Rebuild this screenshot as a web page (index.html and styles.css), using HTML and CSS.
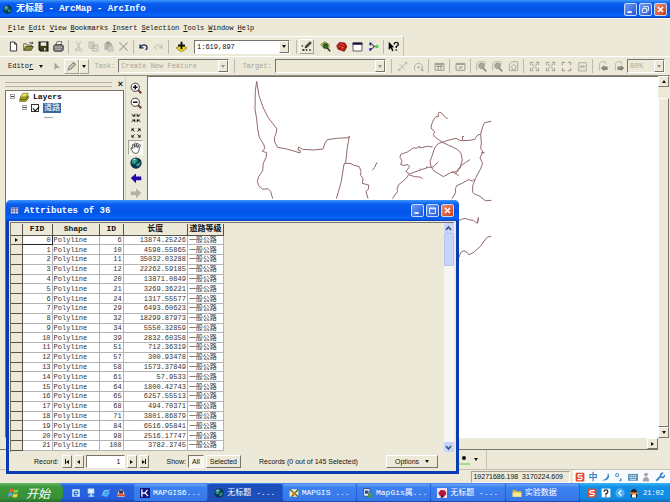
FILE: index.html
```html
<!DOCTYPE html>
<html lang="zh-CN">

<head>
    <meta charset="UTF-8">
    <meta name="viewport" content="width=device-width, initial-scale=1.0">
    <title>无标题 - ArcMap - ArcInfo</title>
    <link rel="stylesheet" href="styles.css">
</head>

<body>
    <!-- Shared icons -->
    <svg class="sprite" aria-hidden="true">
        <symbol id="i-globe" viewBox="0 0 16 16">
            <circle cx="8" cy="8" r="7.5" fill="#0b3350" />
            <path d="M3 4c3-3 6-2 7 0s-2 3-3 5-4 0-5-2zM10 8l4-1-1 4-3 2-2-2z" fill="#2f9a83" />
            <path d="M4 4l3-1" stroke="#bfe4ea" stroke-width="1.5" />
        </symbol>
        <symbol id="i-min" viewBox="0 0 13 13">
            <path d="M3 9.500h5" stroke="#fff" stroke-width="2" />
        </symbol>
        <symbol id="i-close" viewBox="0 0 13 13">
            <path d="M3.500 3.500l6 6M9.500 3.500l-6 6" stroke="#fff" stroke-width="1.800" />
        </symbol>
        <symbol id="i-zoomlayer" viewBox="0 0 16 16">
            <path d="M1 14V3l3-2h9v5" fill="none" stroke="#b5b2a4" stroke-width="1.300" />
            <circle cx="8" cy="7" r="4" fill="#aaa798" stroke="#8b897e" />
            <path d="M10 10l5 5" stroke="#8b897e" stroke-width="2.500" />
        </symbol>
        <symbol id="i-page" viewBox="0 0 16 16">
            <path d="M2 2h4M10 2h4v4M14 10v4h-4M6 14H2v-4M2 6V2M4 4l3 3M12 4L9 7M4 12l3-3M12 12L9 9" fill="none" stroke="#a9a697" stroke-width="1.500" />
        </symbol>
        <symbol id="i-sogou" viewBox="0 0 16 16">
            <rect x="1" y="1" width="14" height="14" rx="2" fill="#e24a2c" />
            <path d="M12 4H6Q3 6 6 8h4q3 2 0 4H4" fill="none" stroke="#fff" stroke-width="2" />
        </symbol>
    </svg>

    <div class="desktop">
        <!-- Main window -->
        <header class="titlebar">
            <svg class="app-icon"><use href="#i-globe" /></svg>
            <h1>无标题 - ArcMap - ArcInfo</h1>
            <div class="win-buttons">
                <button aria-label="Minimize"><svg><use href="#i-min" /></svg></button>
                <button aria-label="Restore"><svg viewBox="0 0 13 13"><path d="M5 5V3h5v5H8M3 5.500h5V10H3z" fill="none" stroke="#fff" /></svg></button>
                <button class="close" aria-label="Close"><svg><use href="#i-close" /></svg></button>
            </div>
        </header>

        <nav class="menubar">
            <a href="#"><u>F</u>ile</a>
            <a href="#"><u>E</u>dit</a>
            <a href="#"><u>V</u>iew</a>
            <a href="#"><u>B</u>ookmarks</a>
            <a href="#"><u>I</u>nsert</a>
            <a href="#"><u>S</u>election</a>
            <a href="#"><u>T</u>ools</a>
            <a href="#"><u>W</u>indow</a>
            <a href="#"><u>H</u>elp</a>
        </nav>

        <!-- Standard toolbar -->
        <div class="toolbar standard">
            <button aria-label="New"><svg viewBox="0 0 16 16"><path d="M3.500 1.500h6l3 3v10h-9zM9.500 1.500v3h3" fill="#fff" stroke="#222" stroke-width="1.300" /></svg></button>
            <button aria-label="Open"><svg viewBox="0 0 16 16"><path d="M1 13V4h4l1 2h6v2" fill="#f5edaa" stroke="#333" /><path d="M1 13.500L4 8h11l-3 5.500z" fill="#8f8a35" stroke="#222" /><path d="M9 3q3-3 5 1m0-3v3h-3" fill="none" stroke="#222" /></svg></button>
            <button aria-label="Save"><svg viewBox="0 0 16 16"><path d="M1.500 1.500h13v13h-11l-2-2z" fill="#3d3f18" stroke="#111" stroke-width="1.500" /><path d="M4 2h8v5H4z" fill="#eee" /><path d="M9 10h2v4H9z" fill="#eee" /></svg></button>
            <button aria-label="Print"><svg viewBox="0 0 16 16"><path d="M4 6l2-5h7l-2 5" fill="#fff" stroke="#333" /><path d="M1 7l2-2h10l2 2v6l-2 2H2l-1-2z" fill="#777" stroke="#222" /><path d="M2 9h11M3 12h9" stroke="#ddd" /></svg></button>
            <i class="sep"></i>
            <button disabled aria-label="Cut"><svg viewBox="0 0 16 16"><path d="M5 1l5 10M11 1L6 11" stroke="#b5b2a4" stroke-width="1.300" /><circle cx="5" cy="13" r="2" fill="none" stroke="#b5b2a4" /><circle cx="11" cy="13" r="2" fill="none" stroke="#b5b2a4" /></svg></button>
            <button disabled aria-label="Copy"><svg viewBox="0 0 16 16"><path d="M1.500 1.500h7v9h-7zM6.500 5.500h8v9h-8zM3 4h4M3 7h3M8 8h5M8 11h5" fill="none" stroke="#b5b2a4" stroke-width="1.300" /></svg></button>
            <button disabled aria-label="Paste"><svg viewBox="0 0 16 16"><path d="M2 3h11v10H2z" fill="#bbb8aa" /><path d="M5 1h5v3H5z" fill="#918f82" /><path d="M7.500 7.500h7v7h-7zM9 10h4M9 12h4" fill="#eee" stroke="#999" /></svg></button>
            <button disabled aria-label="Delete"><svg viewBox="0 0 16 16"><path d="M2 2l12 12M14 2L2 14" stroke="#a9a697" stroke-width="1.800" /></svg></button>
            <i class="sep"></i>
            <button aria-label="Undo"><svg viewBox="0 0 16 16"><path d="M3 5v5h5M3 9q6-6 10-1 1 3-2 5" fill="none" stroke="#111d4d" stroke-width="1.800" /></svg></button>
            <button disabled aria-label="Redo"><svg viewBox="0 0 16 16"><path d="M13 5v5H8M13 9Q7 3 3 8q-1 3 2 5" fill="none" stroke="#c2bfb1" stroke-width="1.500" /></svg></button>
            <i class="sep"></i>
            <button class="add-data" aria-label="Add Data"><svg viewBox="0 0 16 16"><path d="M0 10l8-4 8 4-8 6z" fill="#f0de1c" stroke="#766b14" /><path d="M8 1v11M3 6.500h10" stroke="#111" stroke-width="2.800" /></svg></button>
            <span class="combo scale">
                <select aria-label="Map scale"><option>1:619,897</option></select><b class="arrow"></b>
            </span>
            <i class="sep"></i>
            <button class="framed" aria-label="Editor Toolbar"><svg viewBox="0 0 16 16"><path d="M2 6v2M2 13h3M7 13h2M12 13h2" stroke="#111" stroke-width="2" /><path d="M6 10l1-3 6-6 2 2-6 6z" fill="#555" stroke="#111" /></svg></button>
            <span class="tool-group">
                <button aria-label="ArcCatalog"><svg viewBox="0 0 16 16"><path d="M1 5l6-4 6 4v6H6z" fill="#c9c451" stroke="#6d6b2d" /><circle cx="8" cy="7" r="4" fill="#335f33" /><path d="M10 10l5 5" stroke="#222" stroke-width="2" /></svg></button>
                <button aria-label="ArcToolbox"><svg viewBox="0 0 16 16"><path d="M1 7l4-5 8 1 3 5-4 7-9-3z" fill="#b31910" stroke="#6d0b08" /><path d="M3 7l9 3M6 4l6 2M9 9v4" stroke="#f26b4c" /></svg></button>
                <button aria-label="Command Line"><svg viewBox="0 0 16 16"><path d="M1.500 2.500h13v12h-13z" fill="#fff" stroke="#222" /><path d="M1 4h14" stroke="#16164e" stroke-width="3" /></svg></button>
                <button aria-label="ModelBuilder"><svg viewBox="0 0 16 16"><path d="M2 2h3v4H2zM2 10h3v4H2z" fill="#27279a" /><path d="M5 4l4 4-4 4M9 8h4" fill="none" stroke="#333" stroke-width="1.500" /><circle cx="13" cy="8" r="2.500" fill="#4fd141" /></svg></button>
            </span>
            <i class="sep"></i>
            <button aria-label="What's This?"><svg viewBox="0 0 16 16"><path d="M1 1v12l3-3 2 5 2-1-2-5h3z" fill="#000" /><path d="M9 5q0-3 3-3t3 3q0 2-3 3v2M12 12v2" fill="none" stroke="#111" stroke-width="2" /></svg></button>
        </div>

        <!-- Editor toolbar -->
        <div class="toolbar editor">
            <button class="editor-menu"><span>Edito<u>r</u></span><b class="tri"></b></button>
            <button disabled aria-label="Edit Tool"><svg viewBox="0 0 16 16"><path d="M5 2v11l3-3h5z" fill="#aaa798" /></svg></button>
            <button disabled class="framed" aria-label="Sketch Tool"><svg viewBox="0 0 16 16"><path d="M3 13l1-4 7-7 3 3-7 7z" fill="#c8c5b8" stroke="#918f82" stroke-width="1.500" /></svg></button>
            <button class="drop" aria-label="Sketch tools"><b class="tri"></b></button>
            <label for="task">Task:</label>
            <span class="combo off wide"><select id="task" disabled><option>Create New Feature</option></select><b class="arrow"></b></span>
            <i class="sep"></i>
            <label for="target">Target:</label>
            <span class="combo off wide"><select id="target" disabled><option></option></select><b class="arrow"></b></span>
            <i class="sep"></i>
            <div class="edit-tools">
                <button disabled aria-label="Split"><svg viewBox="0 0 16 16"><path d="M2 14L13 3M4 5l7 7M11 2h3v3M1 12h3v3" fill="none" stroke="#b5b2a4" stroke-width="1.300" /></svg></button>
                <button disabled aria-label="Rotate"><svg viewBox="0 0 16 16"><path d="M4 14a6 6 0 1 1 8 0M12 10v4h4" fill="none" stroke="#a9a697" stroke-width="1.300" /><circle cx="8" cy="9" r="1.500" fill="#999" /></svg></button>
                <i class="sep"></i>
                <button disabled aria-label="Attributes"><svg viewBox="0 0 16 16"><path d="M1.500 3.500h13v10h-13zM2 5h12M6 5v8M10 5v8M3 8h10" fill="none" stroke="#96938a" stroke-width="1.300" /></svg></button>
                <i class="sep"></i>
                <button disabled aria-label="Sketch Properties"><svg viewBox="0 0 16 16"><path d="M1.500 3.500h13v10h-13zM2 5h12M5 11l6-3M6 8l4 3" fill="none" stroke="#96938a" stroke-width="1.300" /></svg></button>
                <i class="sep"></i>
                <button disabled aria-label="Zoom In Layout"><svg><use href="#i-zoomlayer" /></svg></button>
                <button disabled aria-label="Zoom Out Layout"><svg><use href="#i-zoomlayer" /></svg></button>
                <button disabled aria-label="Pan Layout"><svg viewBox="0 0 16 16"><path d="M2 14V4l4-3h8v13zM5 8l3-3 4 3-2 5H7z" fill="none" stroke="#a9a697" stroke-width="1.300" /></svg></button>
                <i class="sep"></i>
                <button disabled aria-label="Fixed Zoom In"><svg><use href="#i-page" /></svg></button>
                <button disabled aria-label="Fixed Zoom Out"><svg><use href="#i-page" /></svg></button>
                <button disabled aria-label="Whole Page"><svg viewBox="0 0 16 16"><path d="M2 6V2h4M10 2h4v4M14 10v4h-4M6 14H2v-4" fill="none" stroke="#a9a697" stroke-width="1.800" /></svg></button>
                <button disabled aria-label="100%"><svg viewBox="0 0 16 16"><path d="M2.500 2.500h11v12h-11zM6 6v5M10 6v5M5 8h6" fill="none" stroke="#a9a697" stroke-width="1.300" /></svg></button>
                <i class="sep"></i>
                <button disabled aria-label="Previous Extent"><svg viewBox="0 0 16 16"><path d="M2 14V4l3-3h6v4" fill="none" stroke="#a9a697" /><path d="M4 10l5-4v2h5v5H9v2z" fill="#8b897e" /></svg></button>
                <button disabled aria-label="Next Extent"><svg viewBox="0 0 16 16"><path d="M2 14V4l3-3h6v4" fill="none" stroke="#a9a697" /><path d="M15 10l-5-4v2H5v5h5v2z" fill="#8b897e" /></svg></button>
            </div>
            <span class="combo off percent"><select disabled aria-label="Page zoom"><option>80%</option></select><b class="arrow"></b></span>
        </div>

        <main class="workspace">
            <aside class="toc">
                <div class="toc-head"><i class="grip"></i><button aria-label="Close contents">×</button></div>
                <div class="toc-list">
                    <div class="layer-row">
                        <i class="minus"></i>
                        <svg viewBox="0 0 16 16"><path d="M1 11l4-5h10l-4 6H1zM1 14l1-2h9l4-5v3l-4 5H1z" fill="#a4a51c" stroke="#55560d" /><path d="M2 8l4-6h9l-4 6z" fill="#e8e55c" stroke="#696a12" /></svg>
                        <strong>Layers</strong>
                    </div>
                    <div class="layer-row child">
                        <i class="minus"></i>
                        <input type="checkbox" id="road" checked>
                        <label for="road">道路</label>
                    </div>
                    <i class="line-symbol"></i>
                </div>
            </aside>

            <div class="tools">
                <button aria-label="Zoom In"><svg viewBox="0 0 16 16"><circle cx="7" cy="7" r="5.500" fill="#fff" stroke="#333" stroke-width="1.300" /><path d="M4 7h6M7 4v6" stroke="#111" stroke-width="2" /><path d="M11 11l4 4" stroke="#6b3a24" stroke-width="2.500" /></svg></button>
                <button aria-label="Zoom Out"><svg viewBox="0 0 16 16"><circle cx="7" cy="7" r="5.500" fill="#fff" stroke="#333" stroke-width="1.300" /><path d="M4 7h6" stroke="#111" stroke-width="2" /><path d="M11 11l4 4" stroke="#6b3a24" stroke-width="2.500" /></svg></button>
                <button aria-label="Fixed Zoom In"><svg viewBox="0 0 16 16"><path d="M2 3l3 2M14 3l-3 2M2 13l3-2M14 13l-3-2" stroke="#333" stroke-width="1.300" /><path d="M3 6h4V2zM13 6H9V2zM3 10h4v4zM13 10H9v4z" fill="#111" /></svg></button>
                <button aria-label="Fixed Zoom Out"><svg viewBox="0 0 16 16"><path d="M2 2h4L2 6zM14 2h-4l4 4zM2 14h4l-4-4zM14 14h-4l4-4z" fill="#111" /><path d="M3 3l3 3M13 3l-3 3M3 13l3-3M13 13l-3-3" stroke="#222" stroke-width="1.300" /></svg></button>
                <button class="pressed" aria-label="Pan"><svg viewBox="0 0 16 16"><path d="M5 15Q2 11 1 8q1-2 3 1L3 4q1-2 2 0l1 3V2q1-2 2 0v5l1-5q2-1 2 1l-1 5 2-4q2-1 2 1-2 3-2 6l-2 4z" fill="#fff" stroke="#333" /></svg></button>
                <button aria-label="Full Extent"><svg><use href="#i-globe" /></svg></button>
                <button aria-label="Back"><svg viewBox="0 0 16 16"><path d="M1 8l7-6v4h7v5H8v4z" fill="#2208a8" /></svg></button>
                <button disabled aria-label="Forward"><svg viewBox="0 0 16 16"><path d="M15 8L8 2v4H1v5h7v4z" fill="#b3b1a8" /></svg></button>
            </div>

            <!-- Road map -->
            <div class="map-view">
                <svg class="map" viewBox="-276 9 1530 1080" preserveAspectRatio="xMinYMin meet" role="img" aria-label="道路">
                    <g class="roads">
                        <path d="M50 22L46 50 45 105 50 135 53 165 58 190 72 213 74 224 67 232 80 236 78 250 70 268 68 290 56 308 52 322 56 335 68 346 84 344 92 352 98 374" />
                        <path d="M50 22L57 65 70 102 84 130 111 165 107 182 103 190 104 204 113 220 140 225 165 232 180 237 181 230 174 228 176 219 188 226 220 228 249 225 255 207 262 197 290 193 326 191 328 186 322 220 317 266 312 270 304 322 289 374" />
                        <path d="M312 268L330 268 340 273 358 278 363 292 362 304 369 313 367 328 386 333 385 346 378 352 384 374" />
                        <path d="M397 289L404 280 411 265" />
                        <path d="M623 134L616 130 608 120 600 114 594 118 596 128 588 128 580 138 576 148 573 162 584 174 580 182 586 190 600 200 608 205" />
                        <path d="M608 205L620 200 648 193 662 200 690 199 704 196 712 184 722 180 728 158 734 146 754 142M668 199L667 187 672 188" />
                        <path d="M608 205L595 208 584 222 576 246 570 262 573 278 582 291 610 308 632 296 648 293 661 278 667 258 663 238 652 226 640 220 626 214 608 205" />
                        <path d="M578 219L562 217 540 222 538 216 533 222 520 222 502 234 482 241 480 250 486 260 482 272 492 274 504 272 509 278 498 292 508 300 524 294 544 287 566 280 580 279 588 270 594 265M544 287L540 283M560 282V277" />
                        <path d="M548 314L540 309 524 308 506 302 496 316 476 332 471 346 473 352 457 374" />
                        <path d="M636 292L645 298 656 305M648 298L660 282 664 274 676 266 690 257" />
                        <path d="M722 180L724 205 722 224 728 232 725 236 733 235 726 238 720 252 728 268 721 286 706 314 697 321 685 317 666 328 650 335 646 346 647 356 636 374" />
                        <path d="M706 316L698 335 698 355 704 360 720 367 736 380 754 379" />
                        <path d="M650 442L664 436 676 433 690 438 700 439 712 448 715 431 714 443" />
                        <path d="M657 550L662 536 672 530 680 534 686 542 700 536 720 518 737 495 742 489 754 487" />
                    </g>
                </svg>
            </div>
            <div class="vscroll"><button aria-label="Scroll up"><b class="tri up"></b></button><i></i><button aria-label="Scroll down"><b class="tri"></b></button></div>
        </main>

        <div class="hscroll"><button aria-label="Scroll right"><b class="tri right"></b></button></div>
        <div class="drawbar"><button aria-label="Marker Color"><svg viewBox="0 0 11 11"><circle cx="5" cy="4" r="2" fill="#111" /><path d="M0 10h11" stroke="#5fd040" stroke-width="1" /></svg></button><b class="tri"></b></div>
        <footer class="statusbar">
            <output>19271686.198&nbsp; 3170224.609</output>
            <div class="ime">
                <svg><use href="#i-sogou" /></svg>
                <span>中</span>
                <svg viewBox="0 0 16 16"><path d="M11 1q4 6 0 10-4 4-9 2 9-2 9-12z" fill="#3b84c4" /></svg>
                <svg viewBox="0 0 16 16"><circle cx="5" cy="5" r="2.500" fill="none" stroke="#3b84c4" stroke-width="1.500" /><path d="M11 10v3l-2 2" fill="none" stroke="#3b84c4" stroke-width="2" /></svg>
                <svg viewBox="0 0 16 16"><path d="M0 3h16v11H0z" fill="#5b93bb" /><path d="M2 6h12M2 9h12M4 12h8" stroke="#fff" stroke-dasharray="2 1" stroke-width="1.500" /></svg>
                <svg viewBox="0 0 16 16"><circle cx="8" cy="4" r="3" fill="#a3a3ad" /><path d="M3 15q0-7 5-7t5 7z" fill="#a3a3ad" /></svg>
                <svg viewBox="0 0 16 16"><path d="M2 14l7-7" stroke="#3b84c4" stroke-width="3" /><path d="M13 1L9 4v4l4 1 3-4" fill="none" stroke="#3b84c4" stroke-width="2.500" /></svg>
            </div>
        </footer>

        <!-- Taskbar -->
        <div class="taskbar">
            <button class="start">
                <svg viewBox="0 0 16 16"><path d="M2 3q3-2 5 0L6 7Q4 6 1 7z" fill="#ee5a2d" /><path d="M8 3q3 2 6 0l-1 4q-3 2-6 0z" fill="#7fd04a" /><path d="M1 8q3-1 5 0l-1 5q-2-2-5 0z" fill="#5da3f2" /><path d="M7 9q3 1 6 0l-1 4q-3 2-6 0z" fill="#f9d03a" /></svg>
                开始
            </button>
            <div class="quick">
                <a href="#" aria-label="Browser"><svg viewBox="0 0 16 16"><path d="M2 2h12v12H2z" fill="#dcebfa" /><path d="M4 9h7q0-4-3-4t-3 4 5 3" fill="none" stroke="#2378d3" stroke-width="2" /></svg></a>
                <a href="#" aria-label="Desktop"><svg viewBox="0 0 16 16"><path d="M3 1h10v8H3z" fill="#e6f1ff" stroke="#6faaf0" /><path d="M7 9h3v3H7zM4 12h9v2H4z" fill="#bfdcfa" /></svg></a>
                <a href="#" aria-label="Internet Explorer"><svg viewBox="0 0 16 16"><path d="M4 9h8q0-5-4-5T4 9t7 3" fill="none" stroke="#51bdf6" stroke-width="2.500" /><path d="M1 13Q4 4 15 3" fill="none" stroke="#a7e0fa" /></svg></a>
                <a href="#" aria-label="Messenger"><svg viewBox="0 0 16 16"><path d="M2 14q0-9 6-12 6 3 6 12z" fill="#e8d8c5" /><path d="M5 4h6v5H5z" fill="#3d2d34" /><path d="M2 10h12v3H2z" fill="#d8472f" /></svg></a>
            </div>
            <div class="tasks">
                <button><svg viewBox="0 0 16 16"><path d="M0 0h16v16H0z" fill="#0c1580" /><path d="M3 2v12M3 8h5l4-5M8 8l5 5" stroke="#fff" stroke-width="2" fill="none" /></svg>MAPGIS6...</button>
                <button class="active"><svg><use href="#i-globe" /></svg>无标题 -...</button>
                <button><svg viewBox="0 0 16 16"><path d="M1 2h14v12H1z" fill="#f4edc4" /><path d="M1 2l14 12M15 2L4 14" stroke="#385e36" stroke-width="2" /><circle cx="8" cy="9" r="3" fill="#c98231" /></svg>MAPGIS ...</button>
                <button><svg viewBox="0 0 16 16"><path d="M1 1h10v12H1z" fill="#f1f5fb" stroke="#223" /><path d="M3 4h6v5H3z" fill="#224c9c" /><path d="M8 8h7v7H8z" fill="#4b9558" /></svg>MapGis属...</button>
                <button><svg viewBox="0 0 16 16"><path d="M0 0h16v16H0z" fill="#f6dff0" /><path d="M2 8l4-5 7 1 2 5-4 5-7-2z" fill="#b3153b" /><path d="M5 15l3-4 3 4z" fill="#111" /></svg>无标题 -...</button>
                <button><svg viewBox="0 0 16 16"><path d="M1 3h5l2 2h7v9H1z" fill="#d9b43d" /><path d="M1 7h14v7H1z" fill="#f8e88f" /></svg>实验数据</button>
            </div>
            <div class="tray">
                <svg><use href="#i-sogou" /></svg>
                <svg viewBox="0 0 16 16"><path d="M1 1h14v14H1z" fill="#fff" /><path d="M5 6q0-3 3-3t3 3q0 2-3 3v2M8 12v2" fill="none" stroke="#222" stroke-width="2" /></svg>
                <svg viewBox="0 0 16 16"><circle cx="8" cy="8" r="7.500" fill="#4bb0f5" /><path d="M10 4L6 8l4 4" fill="none" stroke="#fff" stroke-width="2" /></svg>
                <svg viewBox="0 0 16 16"><path d="M3 15q-2-13 5-14 7 1 5 14z" fill="#2b2027" /><path d="M5 15q-1-6 3-6t3 6z" fill="#fff" /><path d="M2 7h12v3H2z" fill="#e58a31" /></svg>
                <time>21:02</time>
            </div>
        </div>

        <!-- Attribute table window -->
        <section class="dialog">
            <header class="dialog-title">
                <svg class="app-icon" viewBox="0 0 16 16"><path d="M1 2h14v12H1z" fill="#e6ecff" /><path d="M1 5h14M1 9h14M5 2v12M10 2v12M1 2h14v12H1z" fill="none" stroke="#263f9b" stroke-width="1.200" /></svg>
                <h2>Attributes of 36</h2>
                <div class="win-buttons">
                    <button aria-label="Minimize"><svg><use href="#i-min" /></svg></button>
                    <button aria-label="Maximize"><svg viewBox="0 0 13 13"><path d="M3 3.500h7V10H3zM3 4.500h7" fill="none" stroke="#fff" /></svg></button>
                    <button class="close" aria-label="Close"><svg><use href="#i-close" /></svg></button>
                </div>
            </header>
            <div class="grid-area">
                <div class="grid-scroll">
                    <table>
                        <colgroup>
                            <col class="c-mark"><col class="c-fid"><col class="c-shape"><col class="c-id"><col class="c-len"><col class="c-grade">
                        </colgroup>
                        <thead>
                            <tr><th></th><th>FID</th><th>Shape</th><th>ID</th><th>长度</th><th>道路等级</th></tr>
                        </thead>
                        <tbody>
                            <tr class="current"><th><b class="tri right"></b></th><td>0</td><td>Polyline</td><td>6</td><td>13874.25226</td><td>一般公路</td></tr>
                            <tr><th></th><td>1</td><td>Polyline</td><td>10</td><td>4598.55865</td><td>一般公路</td></tr>
                            <tr><th></th><td>2</td><td>Polyline</td><td>11</td><td>35032.03288</td><td>一般公路</td></tr>
                            <tr><th></th><td>3</td><td>Polyline</td><td>12</td><td>22262.59185</td><td>一般公路</td></tr>
                            <tr><th></th><td>4</td><td>Polyline</td><td>20</td><td>13871.0849</td><td>一般公路</td></tr>
                            <tr><th></th><td>5</td><td>Polyline</td><td>21</td><td>3269.36221</td><td>一般公路</td></tr>
                            <tr><th></th><td>6</td><td>Polyline</td><td>24</td><td>1317.55577</td><td>一般公路</td></tr>
                            <tr><th></th><td>7</td><td>Polyline</td><td>29</td><td>6493.60623</td><td>一般公路</td></tr>
                            <tr><th></th><td>8</td><td>Polyline</td><td>32</td><td>18299.87973</td><td>一般公路</td></tr>
                            <tr><th></th><td>9</td><td>Polyline</td><td>34</td><td>5550.32859</td><td>一般公路</td></tr>
                            <tr><th></th><td>10</td><td>Polyline</td><td>39</td><td>2832.60358</td><td>一般公路</td></tr>
                            <tr><th></th><td>11</td><td>Polyline</td><td>51</td><td>712.36319</td><td>一般公路</td></tr>
                            <tr><th></th><td>12</td><td>Polyline</td><td>57</td><td>300.93478</td><td>一般公路</td></tr>
                            <tr><th></th><td>13</td><td>Polyline</td><td>58</td><td>1573.37849</td><td>一般公路</td></tr>
                            <tr><th></th><td>14</td><td>Polyline</td><td>61</td><td>57.9533</td><td>一般公路</td></tr>
                            <tr><th></th><td>15</td><td>Polyline</td><td>64</td><td>1800.42743</td><td>一般公路</td></tr>
                            <tr><th></th><td>16</td><td>Polyline</td><td>65</td><td>6257.55513</td><td>一般公路</td></tr>
                            <tr><th></th><td>17</td><td>Polyline</td><td>68</td><td>494.70371</td><td>一般公路</td></tr>
                            <tr><th></th><td>18</td><td>Polyline</td><td>71</td><td>3801.86879</td><td>一般公路</td></tr>
                            <tr><th></th><td>19</td><td>Polyline</td><td>84</td><td>6516.95841</td><td>一般公路</td></tr>
                            <tr><th></th><td>20</td><td>Polyline</td><td>98</td><td>2516.17747</td><td>一般公路</td></tr>
                            <tr><th></th><td>21</td><td>Polyline</td><td>108</td><td>3782.3745</td><td>一般公路</td></tr>
                        </tbody>
                    </table>
                </div>
                <div class="xp-scroll">
                    <button aria-label="Scroll up"><svg viewBox="0 0 9 9"><path d="M2 6l2.500-3L7 6" fill="none" stroke="#3d507d" stroke-width="1.500" /></svg></button>
                    <i class="thumb"></i>
                    <button aria-label="Scroll down"><svg viewBox="0 0 9 9"><path d="M2 3l2.500 3L7 3" fill="none" stroke="#3d507d" stroke-width="1.500" /></svg></button>
                </div>
            </div>
            <div class="record-bar">
                <label for="record">Record:</label>
                <button class="nav-btn" aria-label="First"><i class="bar"></i><b class="tri left"></b></button>
                <button class="nav-btn" aria-label="Previous"><b class="tri left"></b></button>
                <input type="text" id="record" value="1">
                <button class="nav-btn" aria-label="Next"><b class="tri right"></b></button>
                <button class="nav-btn" aria-label="Last"><b class="tri right"></b><i class="bar"></i></button>
                <span class="show">Show:</span>
                <button class="on">All</button>
                <button>Selected</button>
                <span class="count">Records (0 out of 145 Selected)</span>
                <button class="options">Options <b class="tri"></b></button>
            </div>
        </section>
    </div>
</body>

</html>
```

FILE: styles.css
```css
* {
    box-sizing: border-box;
}

body {
    margin: 0;
    font: 7px/10px "Liberation Mono", "Noto Sans CJK SC", monospace;
    color: #111;
    background: #ece9d8;
}

button,
select,
input {
    font: inherit;
    color: inherit;
    margin: 0;
    padding: 0;
    border: none;
    border-radius: 0;
    background: none;
}

a {
    color: inherit;
    text-decoration: none;
}

h1,
h2 {
    margin: 0;
    flex: 1;
    font-size: 9px;
    line-height: 14px;
    color: #fff;
    white-space: nowrap;
}

svg {
    display: block;
    flex: none;
}

.sprite {
    position: absolute;
    width: 0;
    height: 0;
}

.desktop {
    position: relative;
    display: flex;
    flex-direction: column;
    height: 100vh;
    overflow: hidden;
}
/* Title bars */

.titlebar,
.dialog-title {
    display: flex;
    flex: none;
    align-items: center;
    gap: 4px;
    height: 18px;
    padding: 0 3px;
    background: linear-gradient(#3c96fb, #0a5df0 20%, #0353e6 60%, #0664fb 85%, #0442c4);
}

.app-icon {
    width: 9px;
    height: 9px;
}

.win-buttons {
    display: flex;
    gap: 2px;
}

.win-buttons button {
    width: 13px;
    height: 13px;
    border: 1px solid #c9d9fa;
    border-radius: 2px;
    background: linear-gradient(135deg, #6e9bf5, #2256dc);
}

.win-buttons .close {
    background: linear-gradient(135deg, #ee8f70, #cf3b17);
}

.win-buttons svg {
    width: 11px;
    height: 11px;
}
/* Menu and toolbars */

.menubar {
    display: flex;
    flex: none;
    align-items: center;
    gap: 4px;
    height: 18px;
    padding-left: 8px;
    border-top: 1px solid #fff;
}

.toolbar {
    display: flex;
    flex: none;
    align-items: center;
    height: 20px;
    padding-left: 6px;
    border-top: 1px solid #fff;
    white-space: nowrap;
}

.toolbar button {
    display: flex;
    flex: none;
    align-items: center;
    justify-content: center;
    width: 15px;
    height: 15px;
}

.toolbar svg {
    width: 11px;
    height: 11px;
}

.toolbar .framed,
.toolbar .drop {
    border: 1px solid;
    border-color: #fff #a6a395 #a6a395 #fff;
}

.toolbar .drop {
    width: 10px;
}

.standard {
    align-self: flex-start;
    padding-right: 2px;
    border-right: 1px solid #c5c2b2;
}

.toolbar .add-data {
    margin: 0 1px 0 3px;
}

.tool-group {
    display: flex;
    gap: 1px;
    margin-left: 4px;
}

.sep {
    flex: none;
    width: 1px;
    height: 14px;
    margin: 0 2px;
    background: #bdbaab;
}

.combo {
    display: flex;
    height: 14px;
    border: 1px solid;
    border-color: #77756a #fff #fff #77756a;
    background: #fff;
}

.combo select {
    flex: 1;
    min-width: 0;
    padding-left: 2px;
    appearance: none;
    opacity: 1;
}

.arrow {
    display: flex;
    align-items: center;
    justify-content: center;
    width: 10px;
    border: 1px solid;
    border-color: #fff #77756a #77756a #fff;
    background: #ece9d8;
}

.arrow::after,
.tri {
    content: "";
    display: inline-block;
    border: 2px solid transparent;
    border-top: 3px solid #111;
    border-bottom: 0;
}

.tri.up {
    border: 2px solid transparent;
    border-bottom: 3px solid #111;
    border-top: 0;
}

.tri.right {
    border: 2px solid transparent;
    border-left: 3px solid #111;
    border-right: 0;
}

.tri.left {
    border: 2px solid transparent;
    border-right: 3px solid #111;
    border-left: 0;
}

.scale {
    width: 96px;
    margin: 0 4px;
}

.off {
    color: #aaa798;
    background: #ece9d8;
}

.off .arrow::after {
    border-top-color: #96938a;
}

.editor {
    padding: 0 5px 0 8px;
    border-bottom: 1px solid #8b897e;
}

.editor label {
    padding: 0 3px 0 5px;
    color: #aaa798;
}

.toolbar .editor-menu {
    gap: 6px;
    width: auto;
    margin-right: 6px;
}

.edit-tools {
    display: flex;
    flex: none;
    align-items: center;
}

.edit-tools button {
    width: 16px;
}

.wide {
    flex: 1;
    min-width: 40px;
    margin-right: 3px;
}

.percent {
    width: 38px;
}
/* Workspace */

.workspace {
    display: flex;
    flex: 1;
    min-height: 0;
}

.toc {
    display: flex;
    flex-direction: column;
    width: 126px;
    padding: 2px 1px 0 5px;
    border-right: 1px solid #d6d3c4;
}

.toc-head {
    display: flex;
    align-items: center;
    gap: 5px;
    height: 12px;
}

.toc-head button {
    width: 7px;
    font: bold 9px/9px "Liberation Sans", sans-serif;
}

.grip {
    flex: 1;
    height: 5px;
    border: 1px solid #b6b3a4;
    border-width: 1px 0;
}

.toc-list {
    flex: 1;
    padding: 0 4px;
    border: 1px solid;
    border-color: #77756a #77756a #fff #77756a;
    background: #fff;
}

.layer-row {
    display: flex;
    align-items: center;
    gap: 4px;
    height: 11px;
}

.layer-row svg {
    width: 10px;
    height: 10px;
}

.layer-row strong {
    font-size: 8px;
}

.layer-row.child {
    padding-left: 12px;
}

.layer-row input {
    appearance: none;
    width: 8px;
    height: 8px;
    border: 1px solid #333;
}

.layer-row input:checked::after {
    content: "";
    display: block;
    width: 5px;
    height: 3px;
    margin: 1px 0 0 1px;
    border: 1px solid #000;
    border-width: 0 0 1px 1px;
    transform: rotate(-45deg);
}

.layer-row label {
    padding: 0 1px;
    font-size: 8px;
    color: #fff;
    background: #39699e;
}

.minus {
    width: 5px;
    height: 5px;
    border: 1px solid #a5a5a5;
    background: linear-gradient(#444, #444) center / 3px 1px no-repeat;
}

.line-symbol {
    display: block;
    width: 9px;
    height: 1px;
    margin: 4px 0 0 34px;
    background: #a6a6a6;
}

.tools {
    display: flex;
    flex-direction: column;
    width: 21px;
    padding: 4px 4px 0 2px;
}

.tools button {
    display: flex;
    align-items: center;
    justify-content: center;
    height: 15px;
}

.tools svg {
    width: 12px;
    height: 12px;
}

.tools .pressed {
    border: 1px solid;
    border-color: #a6a395 #fff #fff #a6a395;
    background: #f6f4ec;
}

.map-view {
    flex: 1;
    min-width: 0;
    border-left: 1px solid #77756a;
    border-top: 1px solid #77756a;
    background: #fff;
}

.map {
    width: 100%;
    height: 100%;
}

.roads path {
    fill: none;
    stroke: #93696b;
    stroke-width: 3;
    stroke-linejoin: round;
}

.vscroll {
    display: flex;
    flex-direction: column;
    width: 12px;
    padding-right: 1px;
}

.vscroll button,
.hscroll button {
    display: flex;
    align-items: center;
    justify-content: center;
    width: 11px;
    height: 11px;
    border: 1px solid;
    border-color: #fff #77756a #77756a #fff;
}

.vscroll i {
    flex: 1;
    margin-top: 11px;
    border: 1px solid;
    border-color: #fff #77756a #77756a #fff;
}

.hscroll {
    display: flex;
    flex: none;
    justify-content: flex-end;
    height: 12px;
    margin-right: 12px;
    border-bottom: 1px solid #77756a;
}

.drawbar {
    display: flex;
    flex: none;
    align-items: center;
    align-self: flex-start;
    gap: 4px;
    height: 19px;
    padding: 0 8px 0 459px;
    border-right: 1px solid #c5c2b2;
}

.drawbar svg {
    width: 11px;
    height: 11px;
}

.statusbar {
    display: flex;
    flex: none;
    justify-content: flex-end;
    align-items: center;
    gap: 3px;
    height: 14px;
    border-top: 1px solid #c5c2b2;
    font-family: "Liberation Sans", "Noto Sans CJK SC", sans-serif;
}

.statusbar output {
    padding: 0 6px 0 1px;
    border: 1px solid;
    border-color: #a6a395 #fff #fff #a6a395;
    white-space: nowrap;
}

.ime {
    display: flex;
    align-items: center;
    justify-content: space-between;
    width: 97px;
    height: 13px;
    padding: 0 5px 0 2px;
    font-size: 9px;
    font-weight: bold;
    color: #3b84c4;
    background: #fafbfd;
}

.ime svg {
    width: 10px;
    height: 10px;
}
/* Taskbar */

.taskbar {
    display: flex;
    flex: none;
    height: 19px;
    color: #fff;
    background: linear-gradient(#4b8ff5, #2663df 15%, #245ddb 80%, #1b49ad);
}

.start {
    display: flex;
    align-items: center;
    gap: 6px;
    width: 63px;
    padding-left: 8px;
    border-radius: 0 6px 6px 0;
    background: linear-gradient(#6bb467, #3b9a3b 20%, #388f38 80%, #27702a);
    font: italic 12px/16px "Noto Sans CJK SC", sans-serif;
    color: #fff;
    white-space: nowrap;
}

.start svg {
    width: 12px;
    height: 12px;
}

.quick {
    display: flex;
    align-items: center;
    gap: 5px;
    padding: 0 8px;
}

.quick svg {
    width: 10px;
    height: 10px;
}

.tasks {
    display: flex;
    flex: 1;
    gap: 1px;
    min-width: 0;
    padding-right: 1px;
}

.tasks button {
    display: flex;
    flex: 1;
    align-items: center;
    gap: 3px;
    min-width: 0;
    margin: 1px 0;
    padding-left: 6px;
    overflow: hidden;
    border-radius: 2px;
    background: linear-gradient(#6ba4fb, #3c81f1 20%, #3677e8);
    font-size: 8px;
    white-space: nowrap;
}

.tasks .active {
    background: #1c4fb8;
}

.tasks svg {
    width: 10px;
    height: 10px;
}

.tray {
    display: flex;
    align-items: center;
    gap: 4px;
    width: 90px;
    padding-left: 7px;
    background: linear-gradient(#3cb5f5, #1290e8 20%, #1189e2 80%, #0e6dba);
}

.tray svg {
    width: 10px;
    height: 10px;
}
/* Attribute window */

.dialog {
    position: absolute;
    left: 6px;
    top: 200px;
    display: flex;
    flex-direction: column;
    width: 453px;
    height: 274px;
    border: 3px solid #0a3cb4;
    border-top: 0;
    border-radius: 5px 5px 0 0;
    background: #ece9d8;
}

.dialog-title {
    height: 21px;
    margin: 0 -3px;
    border-radius: 5px 5px 0 0;
    padding: 0 5px 0 4px;
}

.dialog-title h2 {
    padding-left: 1px;
}

.grid-area {
    display: flex;
    flex: 1;
    min-height: 0;
    margin: 1px 2px 0 1px;
    border-top: 1px solid #77756a;
    border-left: 1px solid #77756a;
}

.grid-scroll {
    flex: 1;
    min-width: 0;
    padding: 1px 0;
    overflow: hidden;
}

.grid-area table {
    width: 213px;
    height: 100%;
    border-collapse: collapse;
    table-layout: fixed;
    background: #fff;
}

.grid-area thead tr {
    height: 11px;
}

.c-mark {
    width: 11px;
}

.c-fid {
    width: 30px;
}

.c-shape {
    width: 47px;
}

.c-id {
    width: 24px;
}

.c-len {
    width: 64px;
}

.c-grade {
    width: 36px;
}

.grid-area th,
.grid-area td {
    padding: 0 1px;
    overflow: hidden;
    border: 1px solid #b4b4b4;
    border-width: 0 1px 1px 0;
    line-height: 8px;
    text-align: right;
    white-space: nowrap;
    color: #333;
}

.grid-area th {
    padding: 0;
    border-color: #55534a;
    background: #ece9d8;
    text-align: center;
    font-size: 8px;
    color: #111;
}

.grid-area td:nth-child(3),
.grid-area td:nth-child(6) {
    text-align: left;
}

.grid-area tbody .tri {
    display: block;
    width: 3px;
    margin: 0 auto;
}

.current td:nth-child(2) {
    border: 1px solid #222;
}

.xp-scroll {
    display: flex;
    flex-direction: column;
    width: 10px;
    background: #f6f5f2;
}

.xp-scroll button {
    height: 10px;
    border-radius: 1px;
    background: #c8d5fb;
}

.xp-scroll svg {
    width: 9px;
    height: 9px;
}

.thumb {
    height: 33px;
    margin-bottom: auto;
    border: 1px solid #b3c4f3;
    border-radius: 1px;
    background: #c8d5fb;
}

.record-bar {
    display: flex;
    flex: none;
    align-items: center;
    gap: 2px;
    height: 19px;
    padding: 0 18px 0 25px;
    font-family: "Liberation Sans", sans-serif;
    white-space: nowrap;
}

.record-bar label {
    padding-right: 1px;
}

.record-bar button {
    display: flex;
    align-items: center;
    justify-content: center;
    height: 13px;
    padding: 0 3px;
    border: 1px solid;
    border-color: #fff #77756a #77756a #fff;
}

.record-bar .nav-btn {
    width: 10px;
    padding: 0;
}

.record-bar .on {
    border-color: #77756a #fff #fff #77756a;
    background: #f6f4ec;
}

.record-bar input {
    width: 39px;
    height: 13px;
    padding-right: 3px;
    border: 1px solid;
    border-color: #77756a #fff #fff #77756a;
    background: #fff;
    text-align: right;
}

.bar {
    width: 1px;
    height: 5px;
    background: #111;
}

.show {
    padding-left: 16px;
}

.count {
    padding-left: 16px;
}

.record-bar .options {
    gap: 6px;
    width: 52px;
    margin-left: auto;
}
```
